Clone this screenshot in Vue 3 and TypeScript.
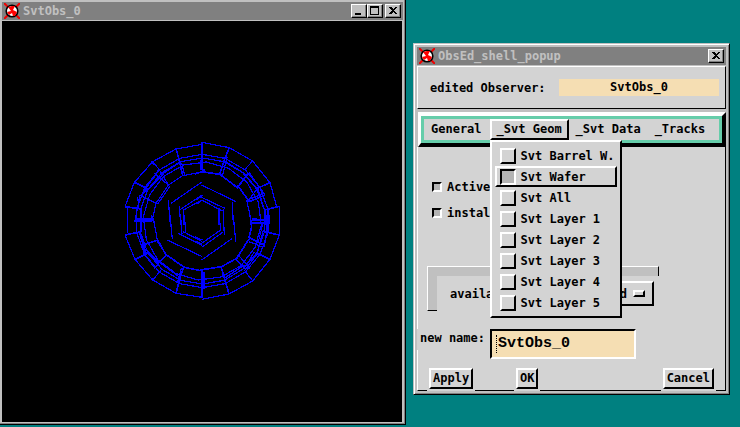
<script setup lang="ts">
import { ref } from 'vue'

interface MenuItem {
  label: string
  checked: boolean
}

const observerName = ref<string>('SvtObs_0')
const newName = ref<string>('SvtObs_0')
const active = ref<boolean>(false)
const installed = ref<boolean>(false)
const highlighted = ref<string>('Svt Wafer')

const geometry = ref<MenuItem[]>([
  { label: 'Svt Barrel W.', checked: false },
  { label: 'Svt Wafer', checked: true },
  { label: 'Svt All', checked: false },
  { label: 'Svt Layer 1', checked: false },
  { label: 'Svt Layer 2', checked: false },
  { label: 'Svt Layer 3', checked: false },
  { label: 'Svt Layer 4', checked: false },
  { label: 'Svt Layer 5', checked: false },
])

interface Quadrant {
  x: number
  y: number
  thin: string
  thick: string
}

// Closed ring of support planes between the two outer wafer layers.
function ring(radius: number, sides: number, start: number): string {
  const points: string[] = []
  for (let k = 0; k < sides; k++) {
    const angle = ((start + (360 / sides) * k) * Math.PI) / 180
    points.push(`${Math.round(262 + radius * Math.cos(angle))},${Math.round(258 + radius * Math.sin(angle))}`)
  }
  return points.join(' ')
}

const rings: string[] = [ring(200, 18, 10), ring(189, 18, 10), ring(177, 16, 4)]

// Wafer outlines, one group for each quadrant of the barrel.
const quadrants: Quadrant[] = [
  {
    x: 0,
    y: 0,
    thin:
      'M262 28L183 42L113 80L58 142L30 215M38 215V270M113 80L132 103L160 150M118 115L160 150L203 122L262 111' +
      'M160 150L123 205L110 262M165 154L128 207M195 82L142 117' +
      'M132 103L78 182M145 118L98 165M120 125L88 160M200 84L209 120M262 105H270M75 180L60 258H108M68 185L72 222' +
      'M262 140L168 205M160 195L166 270M262 180L193 225M193 213L197 270M205 222L207 270M205 225L262 195',
    thick: 'M183 40L195 85L203 122M262 25V105M58 142L98 162L78 182L123 205M30 215L78 222V270M108 80L118 88',
  },
  {
    x: 240,
    y: 0,
    thin:
      'M22 22L103 38L173 78L225 143L245 215H253V270M97 65L83 120M173 78L148 105' +
      'M92 80L155 120M162 112L210 180M150 120L190 165L210 230' +
      'M195 160L205 185M163 193L208 175M155 195L170 265M170 250L222 258M170 264H222V255M16 75V105M187 160L160 198' +
      'M20 150L123 200M112 200L115 270M8 150L22 140M15 185L90 220M20 195L82 228M72 220V270M85 222V270M5 195L22 180M5 208L20 196',
    thick:
      'M20 22V105M103 38L88 75L73 120M0 117L20 110L75 118L127 158L160 115M127 150L163 200L210 180M225 143L187 160M248 215L210 225V270',
  },
  {
    x: 0,
    y: 240,
    thin:
      'M38 0V55M30 60L60 133L113 195L183 235L262 247M113 195L140 163M62 0V18M62 20H110V0M75 55L95 120M72 50L90 110' +
      'M115 10L128 80L152 118M155 118L118 160M82 95L130 140L192 185M100 108L142 165M86 115L120 160' +
      'M200 158L188 200M165 0L172 73M157 75L262 125M197 0L200 55M208 0L212 50M190 55L262 92' +
      'M205 50L262 80M212 50L196 58',
    thick:
      'M30 60L78 50V0M62 13L110 11M60 133L98 115M80 92L128 75L152 118L208 157L262 168V247M183 235L192 200L205 158M113 190V198',
  },
  {
    x: 240,
    y: 240,
    thin:
      'M216 0V50M253 0V60L225 133L173 198L148 165M173 198L102 237L22 253M27 170V222M162 80L205 97' +
      'M205 45L188 110M215 50L208 95M130 120L165 160M120 130L150 160M188 115L150 165M178 110L155 150' +
      'M148 150L88 190M205 20L190 80' +
      'M115 0L122 80M112 70L20 135M0 115L22 125M72 0L77 45L20 85M85 0L88 60M83 52L20 97M0 65L22 75M0 78L22 88',
    thick:
      'M208 0V50L253 60M225 133L188 115M102 237L78 155M20 165V250M170 15H222V0M172 25L218 22M165 0L170 35L162 68L210 92M162 72L125 130L80 155L15 165',
  },
]
</script>

<template>
  <main class="desktop">
    <section class="window viewer">
      <header class="title-bar">
        <svg class="logo" viewBox="0 0 16 16" aria-hidden="true">
          <path d="M0 0L16 16M16 0L0 16" stroke="#e00" stroke-width="2" />
          <circle cx="8" cy="8" r="5.800" fill="#fff" stroke="#000" stroke-width="1.600" />
          <path d="M4 4L8 3L11 3L9 7L13 9L11 13H9L8 10L5 12L3 9L7 8Z" fill="#f00" />
        </svg>
        <h1>SvtObs_0</h1>
        <button class="tool" aria-label="Minimize">
          <svg viewBox="0 0 12 10"><path d="M2 7h6v2H2z" /></svg>
        </button>
        <button class="tool" aria-label="Maximize">
          <svg viewBox="0 0 12 10"><path d="M1 0h9v9H1zM2 2v6h7V2z" fill-rule="evenodd" /></svg>
        </button>
        <button class="tool close" aria-label="Close">
          <svg viewBox="0 0 12 10"><path d="M2 1h2l2 2 2-2h2L7 4.500l3 3.500H8L6 6 4 8H2l3-3.500z" /></svg>
        </button>
      </header>
      <div class="canvas">
        <svg class="barrel" viewBox="0 0 510 510" role="img" aria-label="Wafer geometry">
          <polygon v-for="points in rings" :key="points" :points="points" class="thin" />
          <g v-for="(q, i) in quadrants" :key="i" :transform="`translate(${q.x} ${q.y})`">
            <path :d="q.thin" class="thin" />
            <path :d="q.thick" class="thick" />
          </g>
        </svg>
      </div>
    </section>

    <section class="window editor">
      <header class="title-bar">
        <svg class="logo" viewBox="0 0 16 16" aria-hidden="true">
          <path d="M0 0L16 16M16 0L0 16" stroke="#e00" stroke-width="2" />
          <circle cx="8" cy="8" r="5.800" fill="#fff" stroke="#000" stroke-width="1.600" />
          <path d="M4 4L8 3L11 3L9 7L13 9L11 13H9L8 10L5 12L3 9L7 8Z" fill="#f00" />
        </svg>
        <h1>ObsEd_shell_popup</h1>
        <button class="tool close" aria-label="Close">
          <svg viewBox="0 0 12 10"><path d="M2 1h2l2 2 2-2h2L7 4.500l3 3.500H8L6 6 4 8H2l3-3.500z" /></svg>
        </button>
      </header>

      <div class="observer">
        <label for="edited">edited Observer:</label>
        <output id="edited">{{ observerName }}</output>
      </div>

      <nav class="menu-bar">
        <div class="menu-strip">
          <button class="menu">General</button>
          <div class="menu-holder">
            <button class="menu open" aria-expanded="true">_Svt Geom</button>
            <div class="dropdown">
              <label
                v-for="item in geometry"
                :key="item.label"
                class="item"
                :class="{ current: item.label === highlighted }"
                @mouseenter="highlighted = item.label"
              >
                <input v-model="item.checked" type="checkbox" class="toggle" />
                <span>{{ item.label }}</span>
              </label>
            </div>
          </div>
          <button class="menu">_Svt Data</button>
          <button class="menu">_Tracks</button>
        </div>
      </nav>

      <form class="body" @submit.prevent>
        <div class="flags">
          <label><input v-model="active" type="checkbox" class="flag" />Active</label>
          <label><input v-model="installed" type="checkbox" class="flag" />install</label>
        </div>

        <div class="available">
          <div class="rail-top"></div>
          <div class="rail-left"></div>
          <div class="choice">
            <span>availa</span>
            <button type="button" class="option">d<i></i></button>
          </div>
        </div>

        <div class="rename">
          <label for="new-name">new name:</label>
          <div class="entry">
            <input id="new-name" v-model="newName" type="text" />
          </div>
        </div>

        <footer>
          <button class="push">Apply</button>
          <button class="push">OK</button>
          <button class="push">Cancel</button>
        </footer>
      </form>
    </section>
  </main>
</template>

<style>
body {
  background: #008080;
}
</style>

<style scoped>
* {
  box-sizing: border-box;
}

.desktop {
  display: flex;
  align-items: flex-start;
  gap: 7px;
  min-height: 100vh;
  padding-right: 10px;
  background: #008080;
  color: #000;
  font: bold 12px/16px 'DejaVu Sans Mono', 'Liberation Mono', monospace;
  white-space: nowrap;
}

button,
input {
  margin: 0;
  padding: 0;
  border-radius: 0;
  color: inherit;
  font: inherit;
}

.window {
  display: flex;
  flex-direction: column;
  background: #c0c0c0;
}

.viewer {
  flex: 1;
  height: calc(100vh - 2px);
  padding: 2px;
  border: solid #000;
  border-width: 0 1px 1px 0;
  box-shadow: inset -1px -1px #808080;
}

.editor {
  flex: 0 0 317px;
  margin-top: 43px;
  padding: 3px;
  border: 1px solid;
  border-color: #c0c0c0 #000 #000 #c0c0c0;
  box-shadow: inset 1px 1px #fff, inset -1px -1px #808080;
}

.title-bar {
  display: flex;
  align-items: center;
  height: 18px;
  margin-bottom: 1px;
  padding: 0 2px;
  background: #808080;
  color: #c0c0c0;
}

.title-bar h1 {
  flex: 1;
  margin: 0;
  font: inherit;
}

.logo {
  width: 16px;
  height: 16px;
  margin-right: 3px;
}

.tool {
  width: 16px;
  height: 14px;
  border: 1px solid;
  border-color: #fff #000 #000 #fff;
  background: #c0c0c0;
  box-shadow: inset -1px -1px #808080;
  line-height: 0;
}

.tool.close {
  margin-left: 2px;
}

.tool svg {
  width: 12px;
  height: 10px;
  fill: #000;
  shape-rendering: crispEdges;
}

.canvas {
  display: flex;
  flex: 1;
  align-items: center;
  justify-content: center;
  margin-right: 1px;
  padding: 0 4px 4px 0;
  background: #000;
}

.barrel {
  width: 170px;
  height: 170px;
  fill: none;
  stroke: #00f;
  shape-rendering: crispEdges;
}

.thin {
  stroke-width: 3.6;
}

.thick {
  stroke-width: 5;
}

.observer {
  display: flex;
  align-items: center;
  justify-content: space-between;
  height: 43px;
  margin-bottom: 3px;
  padding: 0 6px 0 12px;
  border: 1px solid;
  border-color: #fff #000 #000 #fff;
  background: #d3d3d3;
}

.observer output {
  width: 160px;
  height: 17px;
  background: #f5deb3;
  text-align: center;
}

.menu-bar {
  margin-left: 1px;
  border: 4px solid;
  border-width: 4px 4px 4px 3px;
  border-color: #fff #000 #000 #fff;
  background: #d3d3d3;
}

.menu-strip {
  display: flex;
  border: 3px solid #66cdaa;
}

.menu {
  height: 21px;
  padding: 0 5px;
  border: 2px solid transparent;
  background: #d3d3d3;
  line-height: 17px;
}

.menu.open {
  border-color: #fff #000 #000 #fff;
}

.menu-holder {
  position: relative;
  margin-left: 1px;
}

.dropdown {
  position: absolute;
  top: 100%;
  left: 0;
  z-index: 2;
  width: 132px;
  padding: 3px;
  border: 2px solid;
  border-color: #fff #000 #000 #fff;
  background: #d3d3d3;
}

.item {
  display: flex;
  align-items: center;
  gap: 5px;
  height: 21px;
  padding-left: 3px;
  border: 2px solid transparent;
}

.item.current {
  border-color: #fff #000 #000 #fff;
}

.toggle,
.flag {
  flex: none;
  appearance: none;
  border: 2px solid;
}

.toggle {
  width: 16px;
  height: 16px;
  border-color: #fff #000 #000 #fff;
}

.toggle:checked {
  border-color: #000 #fff #fff #000;
  background: #b3b3b3;
}

.flag {
  width: 10px;
  height: 10px;
  border-color: #000 #fff #fff #000;
  background: #b3b3b3;
}

.body {
  display: flex;
  flex-direction: column;
  padding-top: 32px;
  border: solid;
  border-width: 0 1px 1px 1px;
  border-color: #fff #000 #000 #fff;
  background: #d3d3d3;
}

.flags {
  display: grid;
  gap: 10px;
  padding-left: 14px;
}

.flags label {
  display: flex;
  align-items: center;
  gap: 5px;
}

.available {
  display: grid;
  grid-template-columns: 10px 1fr;
  grid-template-rows: 10px 35px;
  width: 232px;
  margin: 45px 0 0 9px;
}

.rail-top {
  grid-column: 1 / 3;
  border: solid;
  border-width: 1px 1px 0 1px;
  border-color: #fff #000 #000 #fff;
  background: #c0c0c0;
}

.rail-left {
  border: solid;
  border-width: 0 0 1px 1px;
  border-color: #000 #000 #000 #fff;
  background: #c0c0c0;
}

.choice {
  display: flex;
  align-items: center;
  justify-content: space-between;
  padding: 0 5px 0 13px;
}

.option {
  display: flex;
  align-items: center;
  justify-content: flex-end;
  gap: 6px;
  width: 100px;
  height: 25px;
  padding: 0 7px;
  border: 2px solid;
  border-color: #fff #000 #000 #fff;
  background: #d3d3d3;
}

.option i {
  width: 12px;
  height: 7px;
  border: 2px solid;
  border-color: #fff #000 #000 #fff;
}

.rename {
  display: flex;
  align-items: flex-start;
  gap: 5px;
  margin: 18px 0 0 -1px;
}

.rename label {
  width: 68px;
  height: 21px;
  padding-left: 3px;
  background: #d3d3d3;
  line-height: 18px;
}

.entry {
  display: flex;
  align-items: center;
  width: 146px;
  height: 30px;
  padding-left: 4px;
  border: 2px solid;
  border-color: #000 #fff #fff #000;
  background: #f5deb3;
}

.entry input {
  width: 100%;
  height: 18px;
  padding-left: 1px;
  border: 0;
  border-left: 1px dotted #000;
  outline: 0;
  background: transparent;
  font: bold 15px/18px 'Liberation Mono', monospace;
}

footer {
  display: grid;
  grid-template-columns: 87px 1fr auto;
  justify-items: start;
  padding: 9px 11px 1px 11px;
}

.push {
  height: 21px;
  padding: 0 2px;
  border: 2px solid;
  border-color: #fff #000 #000 #fff;
  background: #d3d3d3;
  box-shadow: 0 0 0 2px #d3d3d3;
  line-height: 17px;
}
</style>
